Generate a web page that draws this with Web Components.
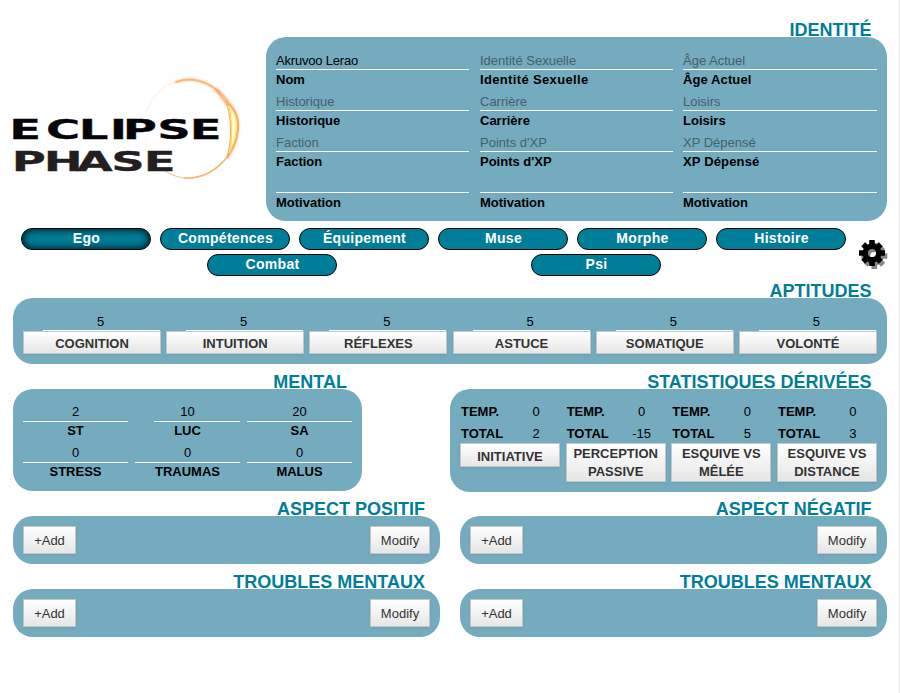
<!DOCTYPE html>
<html lang="fr">
<head>
<meta charset="utf-8">
<title>Eclipse Phase</title>
<style>
html,body{margin:0;padding:0;background:#fff}
body{font:13px/18px "Liberation Sans",Arial,sans-serif;color:#000}
</style>
</head>
<body>
<ep-sheet></ep-sheet>
<script>
const define=(name,css,html)=>customElements.define(name,class extends HTMLElement{
  constructor(){
    super();
    const t=document.createElement('template');
    t.innerHTML='<style>*{box-sizing:border-box}:host{box-sizing:border-box}'+css+'</style>'+(typeof html==='function'?html(this):html);
    this.attachShadow({mode:'open'}).appendChild(t.content.cloneNode(true));
  }
});

/* Titled rounded panel */
define('ep-panel',`
:host{display:flex;flex-direction:column;width:var(--w)}
h2{margin:0;height:18px;padding-right:var(--tp,15px);text-align:right;font-weight:bold;font-size:18px;line-height:22px;color:#007d98;white-space:nowrap}
div{position:relative;height:var(--h);background:#74abbf;border-radius:20px;padding:var(--p,10px)}`,
`<h2><slot name="title"></slot></h2><div><slot></slot></div>`);

/* Value above a rule with its label below */
define('ep-field',`
:host{display:block;height:41px;text-align:var(--align,left)}
.v{height:19px;line-height:var(--lh,19px);border-bottom:1px solid #fff;margin-left:var(--ml,0);padding-right:var(--pr,0);white-space:nowrap}
.l{font-weight:bold;line-height:var(--lh,19px);white-space:nowrap}
::slotted([data-empty]){color:#44606b}`,
`<div class="v"><slot name="value"></slot></div><div class="l"><slot></slot></div>`);

/* Grey gradient button */
define('ep-button',`
:host{display:block}
button{display:block;width:100%;height:var(--bh,28px);margin:0;padding:var(--bp,1px) 0 0;border:1px solid #c6c6c6;background:linear-gradient(#fff,#e6e6e6);box-shadow:0 1px 2px rgba(0,0,0,.08);font:var(--bw,normal) 13px/18px "Liberation Sans",Arial,sans-serif;color:#333;text-align:center}`,
`<button><slot></slot></button>`);

/* Sheet tab */
define('ep-tab',`
:host{display:block;width:130px;height:22px;border:1px solid #000;border-radius:11px;background:#007d98;color:#fff;font-weight:bold;font-size:14px;line-height:19px;text-align:center;letter-spacing:.3px;padding-left:1px}
:host([active]){box-shadow:inset 0 0 8px #000}`,`<slot></slot>`);

/* Ability score */
define('ep-aptitude',`
:host{display:block}
.v{height:19px;line-height:20px;margin:0 1px 0 20px;border-bottom:1px solid #fff;text-align:center;padding-right:2px}
ep-button{--bh:23px;--bw:bold;--bp:2px}`,
`<div class="v"><slot name="value">5</slot></div><ep-button><slot></slot></ep-button>`);

/* Derived statistic */
define('ep-stat',`
:host{display:block}
.r{display:flex;height:22px;line-height:25px;font-weight:bold;padding-left:1px}
.r span:first-child{width:60px}
.r span:last-child{width:30px;text-align:center;font-weight:normal}
ep-button{--bw:bold}`,
h=>`<div class="r"><span>TEMP.</span><span>${h.getAttribute('temp')}</span></div><div class="r"><span>TOTAL</span><span>${h.getAttribute('total')}</span></div><ep-button><slot></slot></ep-button>`);

/* Add / modify bar */
define('ep-list-bar',`
:host{display:flex;justify-content:space-between}
.a{width:53px}.m{width:60px}`,
`<ep-button class="a">+Add</ep-button><ep-button class="m">Modify</ep-button>`);

define('ep-logo',`:host{display:block;width:253px;height:120px}svg{display:block}`,
`<svg width="253" height="120" viewBox="0 70 253 120">
<defs><filter id="g" x="-20%" y="-20%" width="140%" height="140%"><feGaussianBlur stdDeviation=".8"/></filter></defs>
<g fill="none" stroke-linecap="round">
<path d="M147 111C152 96 162 86 176 82" stroke="#fbdccb" stroke-width=".7" stroke-dasharray="5 2"/>
<path d="M145 138C148 152 154 163 165 171" stroke="#fdeee4" stroke-width=".7" stroke-dasharray="3 3"/>
<path d="M165 171C175 177 184 179 192 178C207 177 219 168 228 156" stroke="#fbc9a0" stroke-width="1.2"/>
<path d="M184 178C204 179 219 168 228 156" stroke="#f8b66c" stroke-width="1.4"/>
<path d="M176 82C192 76 208 82 219 92C232 103 239 116 238 129C237 142 232 150 227 158" stroke="#fcd0ac" stroke-width="3" filter="url(#g)"/>
<path d="M176 82C192 76 208 82 219 92" stroke="#f8b472" stroke-width="1.7"/>
<path d="M226 101C236 110 239 120 238 129C237 142 232 150 227 158C232 145 233 118 226 101Z" fill="#fffbd0" stroke="#f8ad66" stroke-width="2"/>
<path d="M228 106C235 113 237 121 236 129C235 140 232 147 229 153C233 138 232 118 228 106Z" stroke="#ffe35c" stroke-width="1"/>
<path d="M217 90L227 103" stroke="#f4a766" stroke-width="3" filter="url(#g)"/>
<path d="M222 96L228 104" stroke="#ffd860" stroke-width="1"/>
</g>
<g font-family="DejaVu Sans" font-weight="bold" font-size="27.4" stroke-width=".3">
<text transform="translate(0 139) scale(1.7 1)" x="5.4 27.1 46.3 64.6 72.2 92.5 111.6" y="0" fill="#050509" stroke="#050509">ECLIPSE</text>
<text transform="translate(0 171) scale(1.7 1)" x="6.9 25.7 45.2 65.5 84.6" y="0" fill="#231f20" stroke="#231f20">PHASE</text>
</g></svg>`);

define('ep-gear',`:host{display:block;width:30px;height:30px}svg{display:block}`,
`<svg width="30" height="30" viewBox="-14 -14 30 30"><defs><g id="k" fill="none"><circle r="6.8" stroke-width="5.4"/><path stroke-width="5.6" stroke-linecap="butt" d="M0-7V-13M0 7V13M-7 0H-13M7 0H13M4.9-4.9L8.8-8.8M4.9 4.9L8.8 8.8M-4.9 4.9L-8.8 8.8M-4.9-4.9L-8.8-8.8"/></g></defs><use href="#k" x="2.3" y="3" stroke="#85858c"/><use href="#k" stroke="#000"/></svg>`);

const field=(v,l,empty=true,st='')=>`<ep-field${st?` style="${st}"`:''}><span slot="value"${empty?' data-empty':''}>${v}</span>${l}</ep-field>`;
define('ep-sheet',`
:host{display:block;position:relative;width:900px;height:693px;padding:19px 12px 0 13px;border-right:1px solid #e6e6e6;overflow:hidden}
.top{display:flex;height:202px}
ep-logo{margin:51px 0 0 -13px}
.id{--w:621px;--h:184px;--p:14px 10px 0;--tp:15.5px;margin-left:13px}
.idg{display:grid;grid-template-columns:204px 203px 194px}
.idg ep-field{width:193px}.idg ep-field:nth-child(3n){width:194px}
nav{display:flex;height:59px;padding:7px 0 0 8px}
.tabs{width:825px}.r1{display:flex;gap:9px}.r2{display:flex;gap:194px;margin:4px 0 0 186px}
ep-gear{margin:11px 0 0 12px;flex:none}
.apt{--w:874px;--h:66px;--p:13px 10px;--tp:15.5px;margin-top:0}
.aptg{display:grid;grid-template-columns:repeat(6,138px);justify-content:space-between;margin-top:1px}
.row{display:flex;justify-content:space-between}
.mid{margin-top:7px;height:121px}
.men{--w:349px;--h:102px;--p:14px 10px;--lh:17px}
.meng{display:grid;grid-template-columns:repeat(3,105px);justify-content:space-between;--align:center}
.st{--w:437px;--h:103px;--p:10px 10px;--tp:15.5px}
.stg{display:grid;grid-template-columns:repeat(4,100px);justify-content:space-between;align-items:start}
.stg ep-stat{--bh:39px;--bp:0px}.stg ep-stat:first-child{--bh:24px;--bp:3px}
.duo{margin-top:6px}.duo ep-panel{--w:427px;--h:48px}.duo .e{--tp:15.5px}
.duo+.duo{margin-top:7px}`,
`<div class="top"><ep-logo></ep-logo><ep-panel class="id"><span slot="title">IDENTITÉ</span><div class="idg">
${field('<span style="letter-spacing:-.2px">Akruvoo Lerao</span>','Nom',false)}${field('Identité Sexuelle','<span style="letter-spacing:.35px">Identité Sexuelle</span>')}${field('Âge Actuel','<span style="letter-spacing:.1px">Âge Actuel</span>')}
${field('Historique','Historique')}${field('Carrière','Carrière')}${field('Loisirs','Loisirs')}
${field('Faction','Faction')}${field('Points d\'XP','Points d\'XP')}${field('XP Dépensé','<span style="letter-spacing:.15px">XP Dépensé</span>')}
${field('','Motivation')}${field('','Motivation')}${field('','Motivation')}
</div></ep-panel></div>
<nav><div class="tabs"><div class="r1"><ep-tab active>Ego</ep-tab><ep-tab>Compétences</ep-tab><ep-tab>Équipement</ep-tab><ep-tab>Muse</ep-tab><ep-tab>Morphe</ep-tab><ep-tab>Histoire</ep-tab></div><div class="r2"><ep-tab>Combat</ep-tab><ep-tab>Psi</ep-tab></div></div><ep-gear></ep-gear></nav>
<ep-panel class="apt"><span slot="title">APTITUDES</span><div class="aptg">${['COGNITION','INTUITION','RÉFLEXES','ASTUCE','SOMATIQUE','VOLONTÉ'].map(a=>`<ep-aptitude>${a}</ep-aptitude>`).join('')}</div></ep-panel>
<div class="row mid"><ep-panel class="men"><span slot="title">MENTAL</span><div class="meng">
${field('2','ST',false)}${field('10','LUC',false,'--ml:19px;--pr:19px')}${field('20','SA',false)}${field('0','STRESS',false)}${field('0','TRAUMAS',false)}${field('0','MALUS',false)}</div></ep-panel>
<ep-panel class="st"><span slot="title">STATISTIQUES DÉRIVÉES</span><div class="stg"></div></ep-panel></div>
<div class="row duo"><ep-panel><span slot="title">ASPECT POSITIF</span><ep-list-bar></ep-list-bar></ep-panel><ep-panel class="e"><span slot="title">ASPECT NÉGATIF</span><ep-list-bar></ep-list-bar></ep-panel></div>
<div class="row duo"><ep-panel><span slot="title">TROUBLES MENTAUX</span><ep-list-bar></ep-list-bar></ep-panel><ep-panel class="e"><span slot="title">TROUBLES MENTAUX</span><ep-list-bar></ep-list-bar></ep-panel></div>`);

document.querySelector('ep-sheet').shadowRoot.querySelector('.stg').innerHTML=
[['2','INITIATIVE'],['-15','PERCEPTION<br>PASSIVE'],['5','ESQUIVE VS<br>MÊLÉE'],['3','ESQUIVE VS<br>DISTANCE']].map(s=>`<ep-stat temp="0" total="${s[0]}">${s[1]}</ep-stat>`).join('');
</script>
</body>
</html>
